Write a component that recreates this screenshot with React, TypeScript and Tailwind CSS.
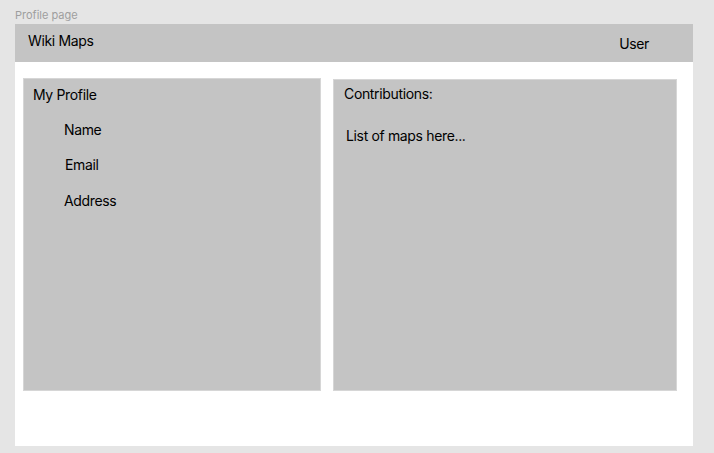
import React from 'react';

const font = { fontFamily: 'Inter, "Noto Sans", sans-serif' };

const App: React.FC = () => {
  return (
    <div className="w-[714px] h-[453px] bg-[#e5e5e5] pl-[15px] text-black" style={font}>
      <div className="h-[24px] pt-[9px] text-[11px] leading-[13px] text-[#9e9e9e]">Profile page</div>
      <div className="w-[678px] h-[422px] bg-white flex flex-col">
        {/* top bar */}
        <div className="h-[38px] bg-[#c4c4c4] flex items-start justify-between pl-[13px] pr-[44px] text-[14px] leading-[17px] tracking-[-0.35px]">
          <span className="mt-[8px]">Wiki Maps</span>
          <span className="mt-[11px]">User</span>
        </div>

        <div className="flex items-start pt-[16px] pl-[8px] gap-[12px]">
          {/* profile panel */}
          <div className="w-[298px] h-[313px] bg-[#c4c4c4] border border-[#d6d6d6] pt-[7px] pl-[9px] text-[14px] leading-[17px] tracking-[-0.35px]">
            <div>My Profile</div>
            <div className="mt-[18px] ml-[31px]">Name</div>
            <div className="mt-[18px] ml-[32px]">Email</div>
            <div className="mt-[19px] ml-[31px]">Address</div>
          </div>

          {/* contributions panel */}
          <div className="mt-[1px] w-[344px] h-[312px] bg-[#c4c4c4] border border-[#d6d6d6] pt-[5px] pl-[10px] text-[14px] leading-[17px] tracking-[-0.35px]">
            <div>Contributions:</div>
            <div className="mt-[25px] ml-[2px]">List of maps here...</div>
          </div>
        </div>
      </div>
    </div>
  );
};

export default App;
